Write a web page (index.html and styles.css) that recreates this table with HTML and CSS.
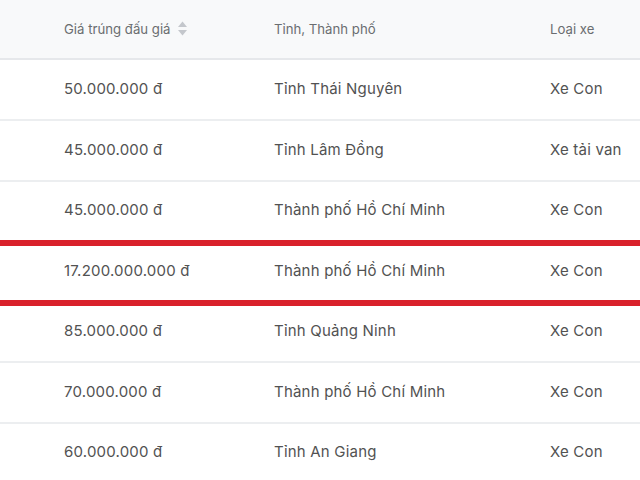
FILE: index.html
```html
<!DOCTYPE html>
<html lang="vi">
<head>
<meta charset="utf-8">
<link rel="stylesheet" href="styles.css">
</head>
<body>
<div class="table">
  <div class="row head">
    <div class="cell c1">Giá trúng đấu giá
      <svg class="sort" width="11" height="17" viewBox="0 0 11 17"><path d="M5.5 1.5 L10 7 H1 Z" fill="#c4c7cc"/><path d="M5.5 15.5 L10 10 H1 Z" fill="#c4c7cc"/></svg>
    </div>
    <div class="cell c2">Tỉnh, Thành phố</div>
    <div class="cell c3">Loại xe</div>
  </div>
  <div class="row first"><div class="cell c1">50.000.000 đ</div><div class="cell c2">Tỉnh Thái Nguyên</div><div class="cell c3">Xe Con</div></div>
  <div class="row"><div class="cell c1">45.000.000 đ</div><div class="cell c2">Tỉnh Lâm Đồng</div><div class="cell c3">Xe tải van</div></div>
  <div class="row"><div class="cell c1">45.000.000 đ</div><div class="cell c2">Thành phố Hồ Chí Minh</div><div class="cell c3">Xe Con</div></div>
  <div class="row hl"><div class="cell c1">17.200.000.000 đ</div><div class="cell c2">Thành phố Hồ Chí Minh</div><div class="cell c3">Xe Con</div></div>
  <div class="row"><div class="cell c1">85.000.000 đ</div><div class="cell c2">Tỉnh Quảng Ninh</div><div class="cell c3">Xe Con</div></div>
  <div class="row"><div class="cell c1">70.000.000 đ</div><div class="cell c2">Thành phố Hồ Chí Minh</div><div class="cell c3">Xe Con</div></div>
  <div class="row"><div class="cell c1">60.000.000 đ</div><div class="cell c2">Tỉnh An Giang</div><div class="cell c3">Xe Con</div></div>
</div>
</body>
</html>
```
FILE: styles.css
```css
* { box-sizing: border-box; }
html, body { margin: 0; padding: 0; background: #ffffff; }
body {
  font-family: Inter, "Noto Sans", sans-serif;
  color: #525252;
  overflow: hidden;
}
.table { width: 640px; }
.row {
  display: grid;
  grid-template-columns: 274px 276px 90px;
  height: 60.5px;
  align-items: center;
  border-bottom: 2px solid #eceef0;
  font-size: 15px;
  letter-spacing: 0.2px;
  padding-bottom: 2px;
}
.row.first { height: 61px; }
.row.head {
  height: 60px;
  background: #f8f9fa;
  border-bottom: 2px solid #e6e8eb;
  font-size: 13.2px;
  letter-spacing: 0;
  color: #6a6d70;
  padding-bottom: 1px;
}
.row.hl { position: relative; }
.row.hl::before,
.row.hl::after {
  content: "";
  position: absolute;
  left: 0;
  right: 0;
  height: 6px;
  background: #d9212b;
}
.row.hl::before { top: -2px; }
.row.hl::after { bottom: -5px; }
.cell { white-space: nowrap; }
.c1 { padding-left: 64px; display: flex; align-items: center; gap: 6px; }
.sort { display: block; }
```
